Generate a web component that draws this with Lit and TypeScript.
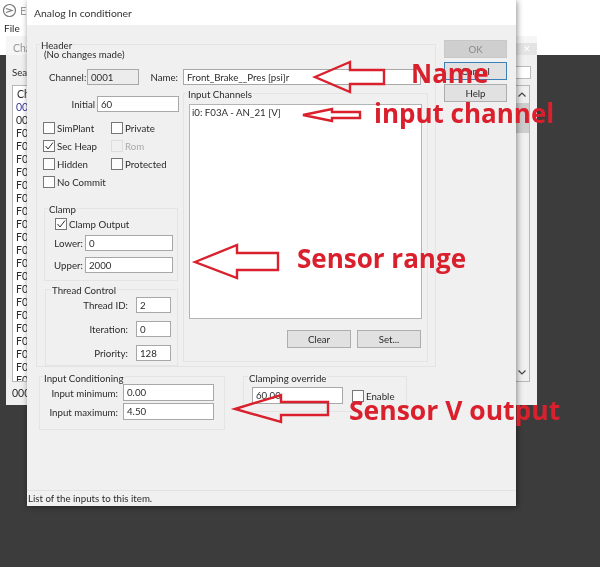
import { LitElement, html, css, svg } from "lit";
import { customElement } from "lit/decorators.js";

const rows = ["0001","0002","F001","F002","F003","F004","F005","F006","F007","F008","F009","F00A","F00B","F00C","F00D","F00E","F00F","F010","F011","F012","F013","F014","F015"];
const arrows = [
  "315,77 350,62 350,70 384,70 384,84 350,84 350,92",
  "303,115 332,109 332,112 360,112 360,118 332,118 332,121",
  "195,262 237,245 237,253 278,253 278,270 237,270 237,278",
  "235,409 281,395 281,402 328,402 328,415 281,415 281,422",
];

@customElement("app-root")
export class AppRoot extends LitElement {
  static styles = css`
    :host { display: block; width: 600px; height: 567px; position: relative; overflow: hidden; background: #3c3c3c; filter: blur(.3px);
      font-family: "Lato", "Open Sans", sans-serif; font-size: 9.7px; color: #2b2b2b; }
    .appbar { height: 55px; background: #fff; }
    .apptitle { height: 20px; display: flex; align-items: center; gap: 3px; padding-left: 2px; color: #999; font-size: 11px; }
    .menu { padding-left: 4px; height: 16px; line-height: 16px; font-size: 10px; }
    .child { position: absolute; left: 6px; top: 36px; width: 531px; height: 369px; background: #f0f0f0; box-sizing: border-box; }
    .childtitle { height: 19px; background: #f6f6f6; color: #999; padding: 6px 0 0 7px; position: relative; box-sizing: border-box; font-size: 10.5px; }
    .close { position: absolute; right: 0; top: 7px; width: 21px; height: 12px; background: #e4e4e4; color: #fff; font-size: 9px; line-height: 12px; text-align: center; }
    .search { height: 30px; padding: 11px 6px 0; box-sizing: border-box; display: flex; justify-content: space-between; }
    .searchbox { width: 60px; height: 11px; background: #fff; border: 1px solid #bbb; }
    .list { margin-left: 6px; width: 518px; height: 297px; background: #fff; border: 1px solid #b8b8b8; box-sizing: border-box; position: relative; overflow: hidden; padding: 2px 0 0 3px; font-size: 10.5px; }
    .row { height: 13px; line-height: 13px; }
    .row.hd { padding-left: 1px; }
    .row.blue { color: #3b3b9a; }
    .scroll { position: absolute; right: 0; top: 0; bottom: 0; width: 14px; background: #f0f0f0; }
    .thumb { position: absolute; left: 0; right: 0; top: 17px; height: 30px; background: #cdcdcd; }
    .chev { position: absolute; left: 3px; width: 8px; height: 5px; }
    .childstatus { padding: 5px 0 0 6px; font-size: 10.5px; }
    .dialog { position: absolute; left: 27px; top: 0; width: 489px; height: 506px; background: #f0f0f0; box-shadow: 1px 1px 6px rgba(0,0,0,.45); display: flex; flex-direction: column; }
    .dtitle { height: 25px; flex: none; background: #fff; padding: 6px 0 0 7px; box-sizing: border-box; font-size: 10.4px; line-height: 15px; color: #333; }
    .body { flex: 1; padding: 19px 0 0 9px; }
    .toprow { display: flex; gap: 8px; }
    .group { border: 1px solid #e4e4e4; box-sizing: border-box; }
    .legend { background: #f0f0f0; width: fit-content; margin-top: -6px; margin-left: 4px; padding: 0 1px; line-height: 12px; height: 12px; white-space: nowrap; }
    .header { width: 400px; height: 323px; padding-left: 6px; }
    .header > .legend { margin-left: -3px; }
    .nochg { line-height: 12px; margin: -3px 0 0 1px; height: 13px; }
    .inp { background: #fff; border: 1px solid #a8a8a8; box-sizing: border-box; line-height: 14px; padding-left: 3px; white-space: nowrap; overflow: hidden; flex: none; }
    .inp.off { background: #ececec; }
    .chan { display: flex; align-items: center; margin-top: 8px; height: 16px; margin-left: 6px; white-space: nowrap; }
    .chan .l1 { width: 38px; }
    .chan .v1 { width: 52px; height: 16px; }
    .chan .l2 { width: 39px; text-align: right; margin-right: 5px; }
    .chan .v2 { width: 238px; height: 16px; }
    .cols { display: flex; margin-top: 9px; }
    .left { width: 140px; flex: none; }
    .initial { display: flex; justify-content: flex-end; align-items: center; gap: 2px; margin: 2px 4px 0 0; height: 16px; }
    .initial .inp { width: 82px; height: 16px; }
    .checks { display: grid; grid-template-columns: 68px 1fr; row-gap: 6px; margin-top: 10px; }
    .chk { display: flex; align-items: center; gap: 2px; height: 12px; white-space: nowrap; }
    .box { width: 12px; height: 12px; box-sizing: border-box; border: 1px solid #777; background: #fdfdfd; flex: none; }
    .box svg { display: block; }
    .dim { color: #aaa; }
    .dim .box { border-color: #ddd; background: #f0f0f0; }
    .clamp { width: 134px; height: 73px; margin: 20px 0 0 1px; padding-left: 6px; }
    .clamp .legend { margin-left: -3px; }
    .clampchk { margin: 3px 0 0 4px; }
    .lim { display: flex; align-items: center; justify-content: flex-end; gap: 2px; height: 16px; margin: 5px 4px 0 0; }
    .lim + .lim { margin-top: 5px; padding-top: 1px; }
    .lim .inp { width: 88px; height: 16px; }
    .thread { width: 133px; height: 77px; margin: 8px 0 0 2px; }
    .thread .legend { margin-left: 5px; }
    .tr { display: flex; justify-content: flex-end; align-items: center; gap: 8px; height: 16px; margin: 0 6px 8px 0; }
    .tr .inp { width: 35px; height: 16px; }
    .thread .legend + .tr { margin-top: 1px; }
    .ic { width: 245px; height: 269px; margin-top: -1px; padding-left: 5px; }
    .ic .legend { margin-left: -2px; }
    .iclist { width: 233px; height: 215px; background: #fff; border: 1px solid #b4b4b4; box-sizing: border-box; padding: 0 2px; margin-top: 4px; line-height: 14px; }
    .btns { display: flex; justify-content: flex-end; gap: 6px; margin: 11px 6px 0 0; }
    .btn { background: #e1e1e1; border: 1px solid #adadad; box-sizing: border-box; text-align: center; }
    .btns .btn { width: 64px; height: 18px; line-height: 16px; }
    .side { display: flex; flex-direction: column; gap: 4px; margin-top: -4px; }
    .side .btn { width: 63px; height: 18px; line-height: 16px; }
    .btn.ok { background: #cfcfcf; border-color: #c8c8c8; color: #8a8a8a; }
    .btn.cancel { border: 1px solid #3c80b8; }
    .botrow { display: flex; gap: 18px; margin: 9px 0 0 3px; align-items: flex-start; }
    .cond { width: 186px; height: 54px; }
    .cond .legend { margin-top: -5px; margin-left: 3px; }
    .cr { display: flex; justify-content: flex-end; align-items: center; gap: 5px; height: 17px; margin: 0 10px 2px 0; white-space: nowrap; }
    .cr .inp { width: 91px; height: 17px; }
    .over { width: 164px; height: 36px; }
    .over .legend { margin-top: -5px; }
    .ovr { display: flex; align-items: center; margin: 3px 0 0 8px; gap: 9px; }
    .ovr .inp { width: 91px; height: 17px; }
    .status { height: 16px; flex: none; border-top: 1px solid #e2e2e2; padding-left: 1px; line-height: 15px; box-sizing: border-box; }
    .overlay { position: absolute; inset: 0; pointer-events: none; }
    .note { position: absolute; color: #d9202c; font-weight: 700; white-space: nowrap; line-height: 1; font-family: "Open Sans", sans-serif; }
    .logo { flex: none; }
  `;

  private check() {
    return html`<svg width="10" height="10" viewBox="0 0 10 10"><path d="M1.5 5 L4 8 L9 1.5" fill="none" stroke="#333" stroke-width="1"/></svg>`;
  }
  private chk(label: string, on = false, cls = "") {
    return html`<div class="chk ${cls}"><span class="box">${on ? this.check() : ""}</span>${label}</div>`;
  }

  render() {
    return html`
      <div class="appbar">
        <div class="apptitle">
          <svg class="logo" width="15" height="15" viewBox="0 0 15 15"><circle cx="7.5" cy="7.5" r="6" fill="none" stroke="#777" stroke-width="1.2"/><path d="M4 5.5 L10 7.5 L4 9.5" fill="none" stroke="#777" stroke-width="1.2"/></svg>
          <span>EL</span>
        </div>
        <div class="menu">File</div>
      </div>
      <div class="child">
        <div class="childtitle">Cha<span class="close">✕</span></div>
        <div class="search"><span>Sea</span><span class="searchbox"></span></div>
        <div class="list">
          <div class="row hd">Ch</div>
          ${rows.map((r, i) => html`<div class="row ${i === 0 ? "blue" : ""}">${r}</div>`)}
          <div class="scroll">
            <svg class="chev" style="top:6px" viewBox="0 0 8 5"><path d="M.5 4.5 L4 1 L7.5 4.5" fill="none" stroke="#444" stroke-width="1.2"/></svg>
            <div class="thumb"></div>
            <svg class="chev" style="bottom:6px" viewBox="0 0 8 5"><path d="M.5 .5 L4 4 L7.5 .5" fill="none" stroke="#444" stroke-width="1.2"/></svg>
          </div>
        </div>
        <div class="childstatus">000</div>
      </div>

      <div class="dialog">
        <div class="dtitle">Analog In conditioner</div>
        <div class="body">
          <div class="toprow">
            <div class="group header">
              <div class="legend">Header</div>
              <div class="nochg">(No changes made)</div>
              <div class="chan">
                <span class="l1">Channel:</span><div class="inp off v1">0001</div>
                <span class="l2">Name:</span><div class="inp v2">Front_Brake__Pres [psi]r</div>
              </div>
              <div class="cols">
                <div class="left">
                  <div class="initial"><span>Initial</span><div class="inp">60</div></div>
                  <div class="checks">
                    ${this.chk("SimPlant")}${this.chk("Private")}
                    ${this.chk("Sec Heap", true)}${this.chk("Rom", false, "dim")}
                    ${this.chk("Hidden")}${this.chk("Protected")}
                    ${this.chk("No Commit")}
                  </div>
                  <div class="group clamp">
                    <div class="legend">Clamp</div>
                    <div class="clampchk">${this.chk("Clamp Output", true)}</div>
                    <div class="lim"><span>Lower:</span><div class="inp">0</div></div>
                    <div class="lim"><span>Upper:</span><div class="inp">2000</div></div>
                  </div>
                  <div class="group thread">
                    <div class="legend">Thread Control</div>
                    <div class="tr"><span>Thread ID:</span><div class="inp">2</div></div>
                    <div class="tr"><span>Iteration:</span><div class="inp">0</div></div>
                    <div class="tr"><span>Priority:</span><div class="inp">128</div></div>
                  </div>
                </div>
                <div class="group ic">
                  <div class="legend">Input Channels</div>
                  <div class="iclist">i0: F03A - AN_21 [V]</div>
                  <div class="btns"><div class="btn">Clear</div><div class="btn">Set...</div></div>
                </div>
              </div>
            </div>
            <div class="side">
              <div class="btn ok">OK</div>
              <div class="btn cancel">Cancel</div>
              <div class="btn">Help</div>
            </div>
          </div>
          <div class="botrow">
            <div class="group cond">
              <div class="legend">Input Conditioning</div>
              <div class="cr"><span>Input minimum:</span><div class="inp">0.00</div></div>
              <div class="cr"><span>Input maximum:</span><div class="inp">4.50</div></div>
            </div>
            <div class="group over">
              <div class="legend">Clamping override</div>
              <div class="ovr"><div class="inp">60.00</div>${this.chk("Enable")}</div>
            </div>
          </div>
        </div>
        <div class="status">List of the inputs to this item.</div>
      </div>

      <svg class="overlay" width="600" height="567" viewBox="0 0 600 567">
        ${arrows.map((p) => svg`<polygon points=${p} fill="none" stroke="#d9202c" stroke-width="2.4"/>`)}
      </svg>
      <div class="note" style="left:411px;top:60px;font-size:26px">Name</div>
      <div class="note" style="left:374px;top:100px;font-size:26px">input channel</div>
      <div class="note" style="left:297px;top:245px;font-size:26px">Sensor range</div>
      <div class="note" style="left:349px;top:397px;font-size:26.5px">Sensor V output</div>
    `;
  }
}
